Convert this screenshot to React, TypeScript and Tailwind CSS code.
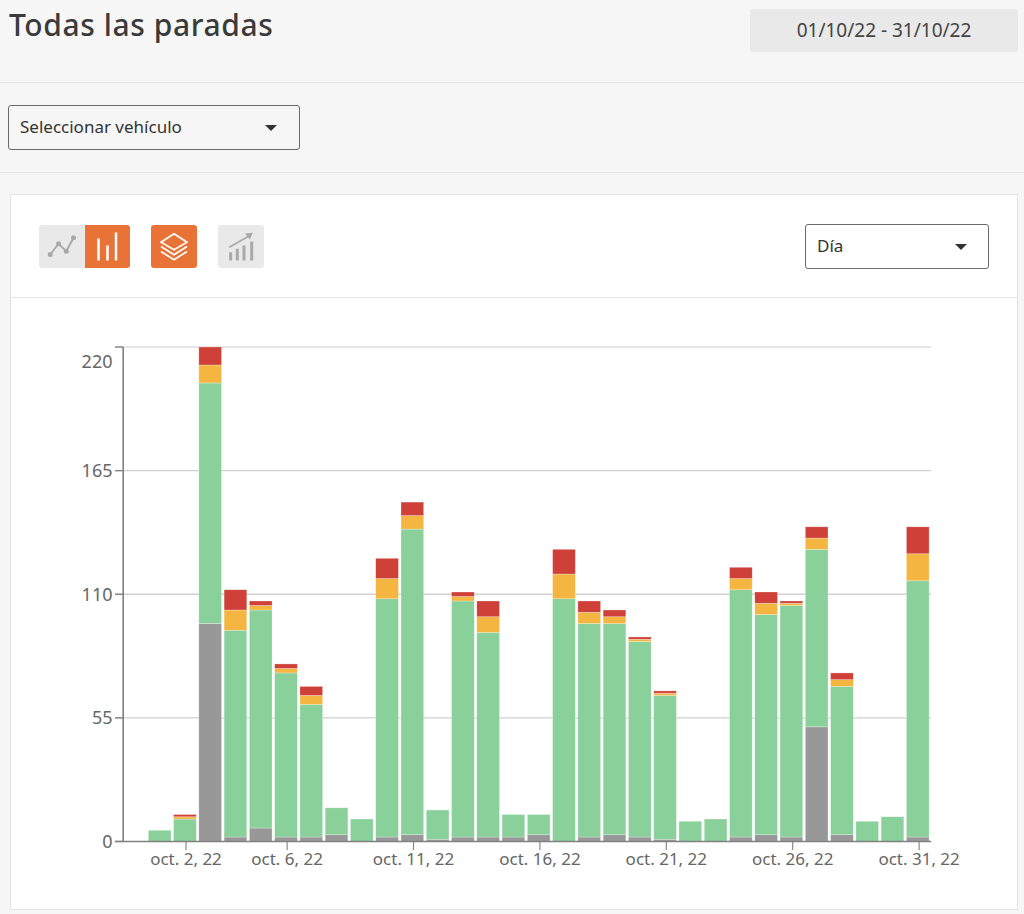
const bars: [number, number, number, number][] = [
  [0, 5, 5, 5], [0, 10, 11, 12], [97, 204, 212, 220], [2, 94, 103, 112], [6, 103, 105, 107], [2, 75, 77, 79],
  [2, 61, 65, 69], [3, 15, 15, 15], [0, 10, 10, 10], [2, 108, 117, 126], [3, 139, 145, 151], [1, 14, 14, 14],
  [2, 107, 109, 111], [2, 93, 100, 107], [2, 12, 12, 12], [3, 12, 12, 12], [0, 108, 119, 130], [2, 97, 102, 107],
  [3, 97, 100, 103], [2, 89, 90, 91], [1, 65, 66, 67], [0, 9, 9, 9], [0, 10, 10, 10], [2, 112, 117, 122],
  [3, 101, 106, 111], [2, 105, 106, 107], [51, 130, 135, 140], [3, 69, 72, 75], [0, 9, 9, 9], [0, 11, 11, 11],
  [2, 116, 128, 140],
];
const colors = ["#979897", "#8ad09a", "#f4b541", "#cf4039"];
const base = 841.5;
const unit = 2.2477;
const yOf = (v: number) => base - v * unit;

function Chart() {
  return (
    <svg width="1006" height="610" viewBox="11 298 1006 610" className="block" style={{ fontFamily: '"Noto Sans", sans-serif' }}>
      {[55, 110, 165, 220].map((v) => (
        <line key={v} x1="115" x2="931" y1={yOf(v)} y2={yOf(v)} stroke={v === 220 ? "#dcdcdc" : "#d0d0d0"} strokeWidth="1.3" />
      ))}
      {bars.map((b, i) => {
        const x = 148.3 + i * 25.27;
        const stops = [0, ...b];
        return (
          <g key={i}>
            {b.map((top, s) => {
              const bottom = stops[s];
              if (top <= bottom) return null;
              return (
                <rect key={s} x={x} width="22.7" y={yOf(top)} height={(top - bottom) * unit} fill={colors[s]} stroke="#ffffff" strokeOpacity="0.45" strokeWidth="0.6" />
              );
            })}
          </g>
        );
      })}
      <line x1="115" x2="931" y1={base} y2={base} stroke="#808080" strokeWidth="1.6" />
      <line x1="123.2" x2="123.2" y1="347" y2="842" stroke="#808080" strokeWidth="1.6" />
      {[0, 55, 110, 165, 220].map((v) => (
        <g key={v}>
          <line x1="115" x2="123" y1={yOf(v)} y2={yOf(v)} stroke="#808080" strokeWidth="1.3" />
          <text x="112.5" y={(v === 220 ? 361.5 : yOf(v)) + 6.5} textAnchor="end" fontSize="18" fill="#666666">{v}</text>
        </g>
      ))}
      {[
        ["oct. 2, 22", 1],
        ["oct. 6, 22", 5],
        ["oct. 11, 22", 10],
        ["oct. 16, 22", 15],
        ["oct. 21, 22", 20],
        ["oct. 26, 22", 25],
        ["oct. 31, 22", 30],
      ].map(([label, i]) => {
        const x = 186 + (i as number - 1) * 25.28;
        return (
          <g key={label as string}>
            <line x1={x} x2={x} y1="842" y2="850" stroke="#808080" strokeWidth="1.1" />
            <text x={x} y="865" textAnchor="middle" fontSize="17" fill="#666666">{label}</text>
          </g>
        );
      })}
    </svg>
  );
}

function Caret() {
  return <span className="w-0 h-0 border-x-[6.5px] border-x-transparent border-t-[6.5px] border-t-[#333333]" />;
}

function LineIcon() {
  return (
    <svg width="30" height="24" viewBox="0 0 30 24" fill="none" stroke="#a9a9a9" strokeWidth="1.9">
      <path d="M3.25 19.5L11.55 8.8L19.25 16.2L26.55 2.8" />
      <circle cx="3.25" cy="19.5" r="2.5" fill="#a9a9a9" stroke="none" />
      <circle cx="11.55" cy="8.8" r="2.5" fill="#a9a9a9" stroke="none" />
      <circle cx="19.25" cy="16.2" r="2.5" fill="#a9a9a9" stroke="none" />
      <circle cx="26.55" cy="2.8" r="2.5" fill="#a9a9a9" stroke="none" />
    </svg>
  );
}

function BarsIcon() {
  return (
    <svg width="22" height="30" viewBox="0 0 22 30" fill="none" stroke="#ffffff" strokeWidth="2.5">
      <path d="M2.5 6.5V28.5M11.5 13.5V28.5M20 0.5V28.5" />
    </svg>
  );
}

function StackIcon() {
  return (
    <svg width="28" height="30" viewBox="0 0 28 30" fill="none" stroke="#ffffff" strokeWidth="1.7">
      <path d="M14 1.8L27 10.2L14 17.8L1 10.2Z" />
      <path d="M1 14.5L14 22.8L27 14.5" />
      <path d="M1 19.5L14 27.8L27 19.5" />
    </svg>
  );
}

function TrendIcon() {
  return (
    <svg width="26" height="30" viewBox="0 0 26 30" fill="none" stroke="#a9a9a9">
      <path d="M2.7 28.5V20.2M9.3 28.5V16.8M16 28.5V13.5M23.7 28.5V9.5" strokeWidth="3" />
      <path d="M1.3 15.2L21 4" strokeWidth="1.8" />
      <path d="M24.7 0.8L17 1.5L22 7.5Z" fill="#a9a9a9" stroke="none" />
    </svg>
  );
}

function Select({ label, className }: { label: string; className: string }) {
  return (
    <div className={`flex items-center justify-between border border-[#6a6a6a] rounded-[3px] h-[45px] pl-[11px] text-[17px] text-[#333333] ${className}`}>
      <span className="pb-[2px]">{label}</span>
      <Caret />
    </div>
  );
}

export default function App() {
  return (
    <div className="w-[1024px] h-[914px] overflow-hidden bg-[#f6f6f6] text-[#3a3a3a]" style={{ fontFamily: '"Noto Sans", sans-serif' }}>
      <header className="h-[83px] border-b border-[#e3e3e3] flex items-start justify-between pl-[9px] pr-[6px]">
        <h1 className="text-[30px] leading-[38px] mt-[6px] font-medium tracking-[0.6px]">Todas las paradas</h1>
        <div className="mt-[9px] w-[268px] h-[43px] rounded-[3px] bg-[#e9e9e9] flex items-center justify-center text-[19px] text-[#444444]">
          01/10/22 - 31/10/22
        </div>
      </header>
      <div className="h-[90px] border-b border-[#e3e3e3] pl-[8px] pt-[22px]">
        <Select label="Seleccionar vehículo" className="w-[292px] pr-[22px]" />
      </div>
      <section className="mt-[21px] ml-[10px] w-[1008px] h-[716px] bg-white border border-[#e3e3e3]">
        <div className="h-[103px] border-b border-[#e3e3e3] flex items-start justify-between pl-[28px] pr-[28px] pt-[29px]">
          <div className="flex items-start pt-px">
            <div className="flex rounded-[3px] overflow-hidden h-[43px]">
              <div className="w-[45.5px] bg-[#e9e9e9] flex items-center justify-center"><LineIcon /></div>
              <div className="w-[45.5px] bg-[#e97336] flex items-center justify-center"><BarsIcon /></div>
            </div>
            <div className="ml-[21px] w-[46px] h-[43px] rounded-[3px] bg-[#e97336] flex items-center justify-center"><StackIcon /></div>
            <div className="ml-[21px] w-[46px] h-[43px] rounded-[3px] bg-[#e9e9e9] flex items-center justify-center"><TrendIcon /></div>
          </div>
          <Select label="Día" className="w-[184px] pr-[21px] bg-white" />
        </div>
        <Chart />
      </section>
    </div>
  );
}
